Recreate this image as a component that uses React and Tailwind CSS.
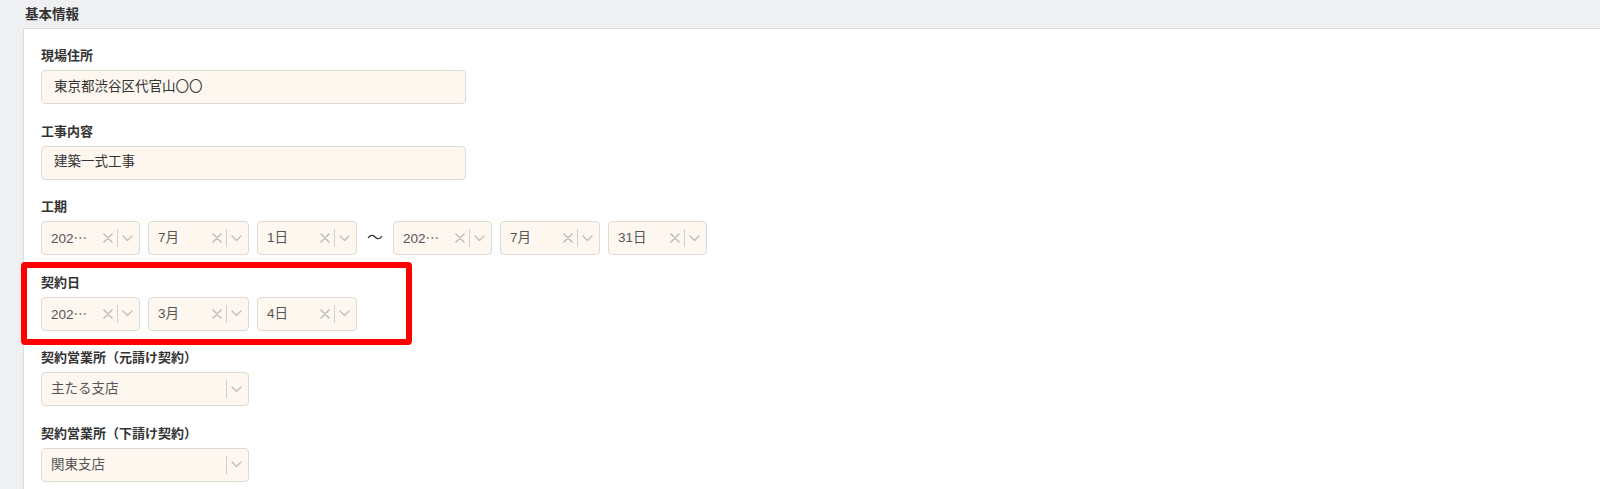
import React from 'react';

const ClearIcon = () => (
    <svg className="w-[10px] h-[10px]" viewBox="0 0 10 10" fill="none" stroke="#c2c2c2" strokeWidth={1.7} strokeLinecap="round">
        <path d="M1 1l8 8M9 1L1 9" />
    </svg>
);

const ChevronIcon = () => (
    <svg className="w-[11px] h-[7px]" viewBox="0 0 11 7" fill="none" stroke="#bdbdbd" strokeWidth={1.3} strokeLinecap="round" strokeLinejoin="round">
        <path d="M1 1l4.5 4.5L10 1" />
    </svg>
);

// 年の値は幅が足りず省略表示
const Year = () => (
    <>
        202<span style={{ fontFamily: '"Noto Sans CJK JP", sans-serif' }}>…</span>
    </>
);

function TextField({ value }) {
    return (
        <div className="flex items-center h-[34px] w-[425px] rounded-[4px] border border-[#dedad5] bg-[#fdf7f0] pl-[12px] text-[13.5px] text-[#333]">
            {value}
        </div>
    );
}

function Select({ value, width = 'w-[100px]', clearable = true }) {
    return (
        <div className={`flex items-center h-[34px] ${width} rounded-[4px] border border-[#dedad5] bg-[#fdf7f0] pl-[9px] pr-[6px]`}>
            <span className="flex-1 whitespace-nowrap text-[13.5px] text-[#555]">{value}</span>
            {clearable && <ClearIcon />}
            <span className="w-px h-[18px] bg-[#d0d0d0] ml-[4px] mr-[4px]" />
            <ChevronIcon />
        </div>
    );
}

function Field({ label, children }) {
    return (
        <div className="mb-[18.6px]">
            <div className="h-[18px] leading-[18px] text-[13px] font-bold text-[#333]">{label}</div>
            <div className="mt-[5px]">{children}</div>
        </div>
    );
}

export default function App() {
    return (
        <div
            className="relative h-[489px] w-full overflow-hidden bg-[#eff0f2]"
            style={{ fontFamily: '"Liberation Sans", "Noto Sans CJK JP", sans-serif' }}
        >
            <div className="pl-[25px] pt-[6px] h-[27px] text-[13.5px] leading-[18px] font-bold text-[#333]">基本情報</div>
            <div className="ml-[23px] mr-[-4px] mt-[1px] h-[470px] border-t border-l border-[#dcdde0] bg-white pl-[17px] pt-[18px]">
                <Field label="現場住所">
                    <TextField value="東京都渋谷区代官山〇〇" />
                </Field>
                <Field label="工事内容">
                    <TextField value="建築一式工事" />
                </Field>
                <Field label="工期">
                    <div className="flex items-center gap-[8px]">
                        <Select value={<Year />} width="w-[99px]" />
                        <Select value="7月" width="w-[101px]" />
                        <Select value="1日" />
                        <span className="px-[2px] text-[16px] text-[#333]">〜</span>
                        <Select value={<Year />} width="w-[99px]" />
                        <Select value="7月" />
                        <Select value="31日" width="w-[99px]" />
                    </div>
                </Field>
                <Field label="契約日">
                    <div className="flex items-center gap-[8px]">
                        <Select value={<Year />} width="w-[99px]" />
                        <Select value="3月" width="w-[101px]" />
                        <Select value="4日" />
                    </div>
                </Field>
                <Field label="契約営業所（元請け契約）">
                    <Select value="主たる支店" width="w-[208px]" clearable={false} />
                </Field>
                <Field label="契約営業所（下請け契約）">
                    <Select value="関東支店" width="w-[208px]" clearable={false} />
                </Field>
            </div>
            <div className="absolute left-[21px] top-[262px] h-[83px] w-[391px] rounded-[4px] border-[6px] border-[#ff0000]" />
        </div>
    );
}
